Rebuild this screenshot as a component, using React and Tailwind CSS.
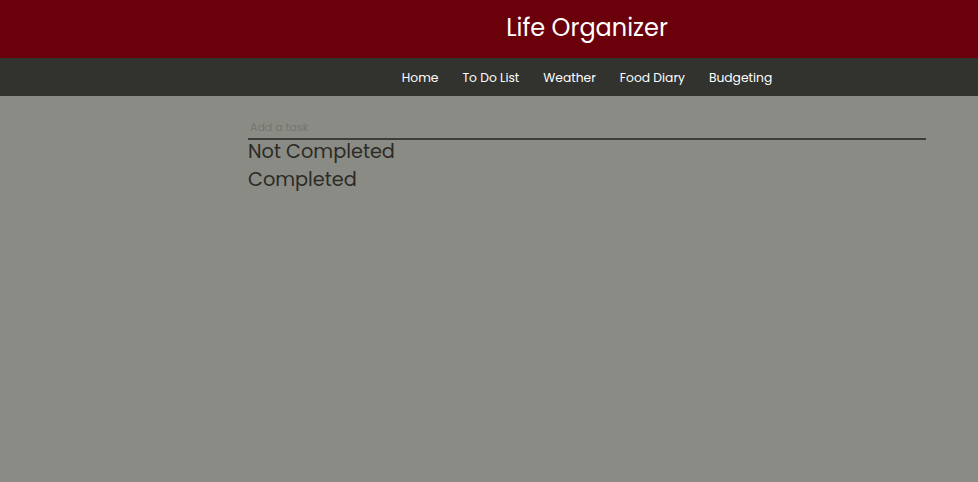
import React from 'react';

const links = ['Home', 'To Do List', 'Weather', 'Food Diary', 'Budgeting'];

export default function App() {
  return (
    <div className="min-h-screen w-full bg-[#8a8b84] font-['Poppins','Inter',sans-serif]">
      <header className="h-[58px] bg-[#69000a] flex items-center pl-[248px] pr-[52px]">
        <h1 className="w-full text-center text-[24px] text-white -mt-[2px]">Life Organizer</h1>
      </header>
      <nav className="h-[38px] bg-[#32332e] flex items-center justify-center gap-6 pt-[2px] pl-[248px] pr-[52px]">
        {links.map((l) => (
          <a key={l} className="text-[12.3px] text-white cursor-pointer">{l}</a>
        ))}
      </nav>
      <main className="pl-[248px] pr-[52px] pt-[18px]">
        <input
          placeholder="Add a task"
          className="w-full h-[22px] bg-transparent border-b-2 border-[#3d3d38] text-[11px] px-[2px] outline-none placeholder:text-[#74756f]"
        />
        <h2 className="text-[19.3px] leading-[28px] text-[#2b2b28] -mt-[2px]">Not Completed</h2>
        <h2 className="text-[19.3px] leading-[28px] text-[#2b2b28]">Completed</h2>
      </main>
    </div>
  );
}
